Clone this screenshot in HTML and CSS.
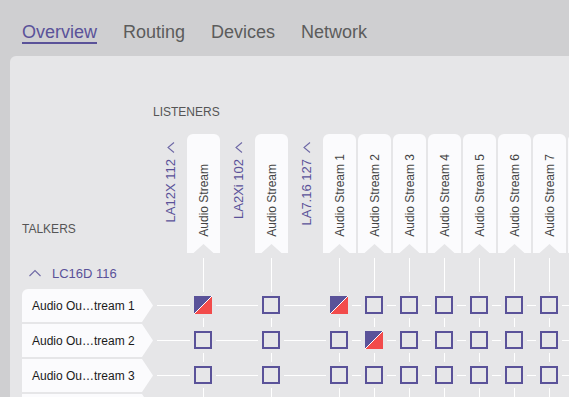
FILE: index.html
```html
<!DOCTYPE html>
<html lang="en">
<head>
    <meta charset="UTF-8">
    <meta name="viewport" content="width=device-width, initial-scale=1.0">
    <title>Overview</title>
    <link rel="stylesheet" href="styles.css">
</head>
<body>
    <nav class="tabs">
        <a class="tab active">Overview</a>
        <a class="tab">Routing</a>
        <a class="tab">Devices</a>
        <a class="tab">Network</a>
    </nav>

    <div class="panel">
        <div class="listeners-title">LISTENERS</div>

        <!-- listener headers -->
        <div class="row head">
            <div class="talker-col"><span class="talkers-title">TALKERS</span></div>
            <div class="dev">
                <svg class="chev-left" width="8" height="11" viewBox="0 0 8 11"><path d="M7 0.5 L1 5.5 L7 10.5"/></svg>
                <span class="vtext">LA12X 112</span>
            </div>
            <div class="slot"><div class="stream"><span class="vtext">Audio Stream</span></div></div>
            <div class="dev">
                <svg class="chev-left" width="8" height="11" viewBox="0 0 8 11"><path d="M7 0.5 L1 5.5 L7 10.5"/></svg>
                <span class="vtext">LA2Xi 102</span>
            </div>
            <div class="slot"><div class="stream"><span class="vtext">Audio Stream</span></div></div>
            <div class="dev">
                <svg class="chev-left" width="8" height="11" viewBox="0 0 8 11"><path d="M7 0.5 L1 5.5 L7 10.5"/></svg>
                <span class="vtext">LA7.16 127</span>
            </div>
            <div class="slot"><div class="stream"><span class="vtext">Audio Stream 1</span></div></div>
            <div class="slot"><div class="stream"><span class="vtext">Audio Stream 2</span></div></div>
            <div class="slot"><div class="stream"><span class="vtext">Audio Stream 3</span></div></div>
            <div class="slot"><div class="stream"><span class="vtext">Audio Stream 4</span></div></div>
            <div class="slot"><div class="stream"><span class="vtext">Audio Stream 5</span></div></div>
            <div class="slot"><div class="stream"><span class="vtext">Audio Stream 6</span></div></div>
            <div class="slot"><div class="stream"><span class="vtext">Audio Stream 7</span></div></div>
            <div class="slot"><div class="stream"><span class="vtext">Audio Stream 8</span></div></div>
        </div>

        <!-- talker device -->
        <div class="row group">
            <div class="talker-col group-name">
                <svg class="chev-up" width="12" height="8" viewBox="0 0 12 8"><path d="M0.5 7 L6 1.5 L11.5 7"/></svg>
                <span>LC16D 116</span>
            </div>
            <div class="dev"></div><div class="slot v"></div>
            <div class="dev"></div><div class="slot v"></div>
            <div class="dev"></div>
            <div class="slot v"></div><div class="slot v"></div><div class="slot v"></div><div class="slot v"></div>
            <div class="slot v"></div><div class="slot v"></div><div class="slot v"></div><div class="slot v"></div>
        </div>

        <div class="row data">
            <div class="talker-col"><div class="talker first">Audio Ou…tream 1</div></div>
            <div class="dev"></div><div class="slot v"><div class="cell"><span class="box on"></span></div></div>
            <div class="dev"></div><div class="slot v"><div class="cell"><span class="box"></span></div></div>
            <div class="dev"></div>
            <div class="slot v"><div class="cell"><span class="box on"></span></div></div>
            <div class="slot v"><div class="cell"><span class="box"></span></div></div>
            <div class="slot v"><div class="cell"><span class="box"></span></div></div>
            <div class="slot v"><div class="cell"><span class="box"></span></div></div>
            <div class="slot v"><div class="cell"><span class="box"></span></div></div>
            <div class="slot v"><div class="cell"><span class="box"></span></div></div>
            <div class="slot v"><div class="cell"><span class="box"></span></div></div>
            <div class="slot v"><div class="cell"><span class="box"></span></div></div>
        </div>

        <div class="row data">
            <div class="talker-col"><div class="talker">Audio Ou…tream 2</div></div>
            <div class="dev"></div><div class="slot v"><div class="cell"><span class="box"></span></div></div>
            <div class="dev"></div><div class="slot v"><div class="cell"><span class="box"></span></div></div>
            <div class="dev"></div>
            <div class="slot v"><div class="cell"><span class="box"></span></div></div>
            <div class="slot v"><div class="cell"><span class="box on"></span></div></div>
            <div class="slot v"><div class="cell"><span class="box"></span></div></div>
            <div class="slot v"><div class="cell"><span class="box"></span></div></div>
            <div class="slot v"><div class="cell"><span class="box"></span></div></div>
            <div class="slot v"><div class="cell"><span class="box"></span></div></div>
            <div class="slot v"><div class="cell"><span class="box"></span></div></div>
            <div class="slot v"><div class="cell"><span class="box"></span></div></div>
        </div>

        <div class="row data">
            <div class="talker-col"><div class="talker">Audio Ou…tream 3</div></div>
            <div class="dev"></div><div class="slot v"><div class="cell"><span class="box"></span></div></div>
            <div class="dev"></div><div class="slot v"><div class="cell"><span class="box"></span></div></div>
            <div class="dev"></div>
            <div class="slot v"><div class="cell"><span class="box"></span></div></div>
            <div class="slot v"><div class="cell"><span class="box"></span></div></div>
            <div class="slot v"><div class="cell"><span class="box"></span></div></div>
            <div class="slot v"><div class="cell"><span class="box"></span></div></div>
            <div class="slot v"><div class="cell"><span class="box"></span></div></div>
            <div class="slot v"><div class="cell"><span class="box"></span></div></div>
            <div class="slot v"><div class="cell"><span class="box"></span></div></div>
            <div class="slot v"><div class="cell"><span class="box"></span></div></div>
        </div>

        <div class="row data">
            <div class="talker-col"><div class="talker">Audio Ou…tream 4</div></div>
            <div class="dev"></div><div class="slot v"><div class="cell"><span class="box"></span></div></div>
            <div class="dev"></div><div class="slot v"><div class="cell"><span class="box"></span></div></div>
            <div class="dev"></div>
            <div class="slot v"><div class="cell"><span class="box"></span></div></div>
            <div class="slot v"><div class="cell"><span class="box"></span></div></div>
            <div class="slot v"><div class="cell"><span class="box"></span></div></div>
            <div class="slot v"><div class="cell"><span class="box"></span></div></div>
            <div class="slot v"><div class="cell"><span class="box"></span></div></div>
            <div class="slot v"><div class="cell"><span class="box"></span></div></div>
            <div class="slot v"><div class="cell"><span class="box"></span></div></div>
            <div class="slot v"><div class="cell"><span class="box"></span></div></div>
        </div>
    </div>
</body>
</html>
```

FILE: styles.css
```css
body, html {
    margin: 0;
    padding: 0;
    height: 100%;
    overflow: hidden;
}
body {
    background-color: #cfcfd1;
    font-family: "Liberation Sans", Arial, sans-serif;
}
.tabs {
    display: flex;
    gap: 26px;
    padding: 22px 0 0 22px;
}
.tab {
    font-size: 18px;
    line-height: 20px;
    color: #5c5c5c;
    border-bottom: 2px solid transparent;
}
.tab.active {
    color: #5a5299;
    border-bottom-color: #5a5299;
}
.panel {
    box-sizing: border-box;
    margin: 12px 0 0 10px;
    height: 341px;
    padding: 49px 0 0 12px;
    background-color: #e6e6e8;
    border-top-left-radius: 6px;
    overflow: hidden;
}
.listeners-title {
    font-size: 12px;
    line-height: 14px;
    color: #555;
    padding-left: 131px;
    margin-bottom: 15px;
}
.row {
    display: flex;
}
.row.head {
    height: 119px;
}
.row.group {
    height: 36px;
}
.row.data {
    height: 35px;
    background: linear-gradient(#fff, #fff) no-repeat 135px 16px / 100% 1px;
}
.talker-col {
    flex: 0 0 132px;
    display: flex;
}
.talkers-title {
    align-self: flex-end;
    padding-bottom: 17px;
    font-size: 12px;
    line-height: 14px;
    color: #555;
}
.group-name {
    box-sizing: border-box;
    align-items: center;
    padding: 4px 0 0 7px;
    font-size: 13px;
    color: #5a5299;
}
.chev-up {
    margin-right: 11px;
}
.chev-up path, .chev-left path {
    fill: none;
    stroke: #6f69a6;
    stroke-width: 1.1;
}
.dev {
    flex: 0 0 33px;
    display: flex;
    flex-direction: column;
    align-items: center;
}
.head .dev {
    padding-top: 8px;
}
.dev .vtext {
    margin-top: 6px;
    font-size: 13px;
    line-height: 15px;
    color: #5a5299;
}
.vtext {
    writing-mode: vertical-rl;
    transform: rotate(180deg);
    white-space: nowrap;
}
.slot {
    flex: 0 0 35px;
}
.slot.v {
    background: linear-gradient(#fff, #fff) no-repeat 16px 0 / 1px 100%;
}
.group .slot.v {
    background-position: 16px 5px;
}
.stream {
    box-sizing: border-box;
    width: 33px;
    height: 119px;
    padding-bottom: 16px;
    display: flex;
    flex-direction: column;
    justify-content: flex-end;
    align-items: center;
    background-color: #fbfbfd;
    border-radius: 6px 6px 0 0;
    clip-path: polygon(0 0, 100% 0, 100% 100%, calc(50% + 10px) 100%, 50% calc(100% - 9px), calc(50% - 10px) 100%, 0 100%);
    font-size: 12px;
    line-height: 14px;
    color: #444;
}
.talker {
    box-sizing: border-box;
    width: 131px;
    height: 33px;
    padding-left: 10px;
    display: flex;
    align-items: center;
    background-color: #fbfbfd;
    clip-path: polygon(0 0, 120px 0, 131px 50%, 120px 100%, 0 100%);
    font-size: 12px;
    color: #1a1a1a;
    white-space: nowrap;
}
.talker.first {
    border-top-left-radius: 6px;
}
.cell {
    box-sizing: border-box;
    width: 26px;
    height: 26px;
    margin: 3px 0 0 3px;
    padding: 4px;
    background-color: #e6e6e8;
}
.box {
    display: block;
    box-sizing: border-box;
    width: 18px;
    height: 18px;
    border: 2px solid #5a5299;
}
.box.on {
    border: none;
    background: linear-gradient(to bottom right, #5a5299 calc(50% - 0.5px), #fff calc(50% - 0.5px), #fff calc(50% + 0.7px), #f24b4b calc(50% + 0.7px));
}
```
